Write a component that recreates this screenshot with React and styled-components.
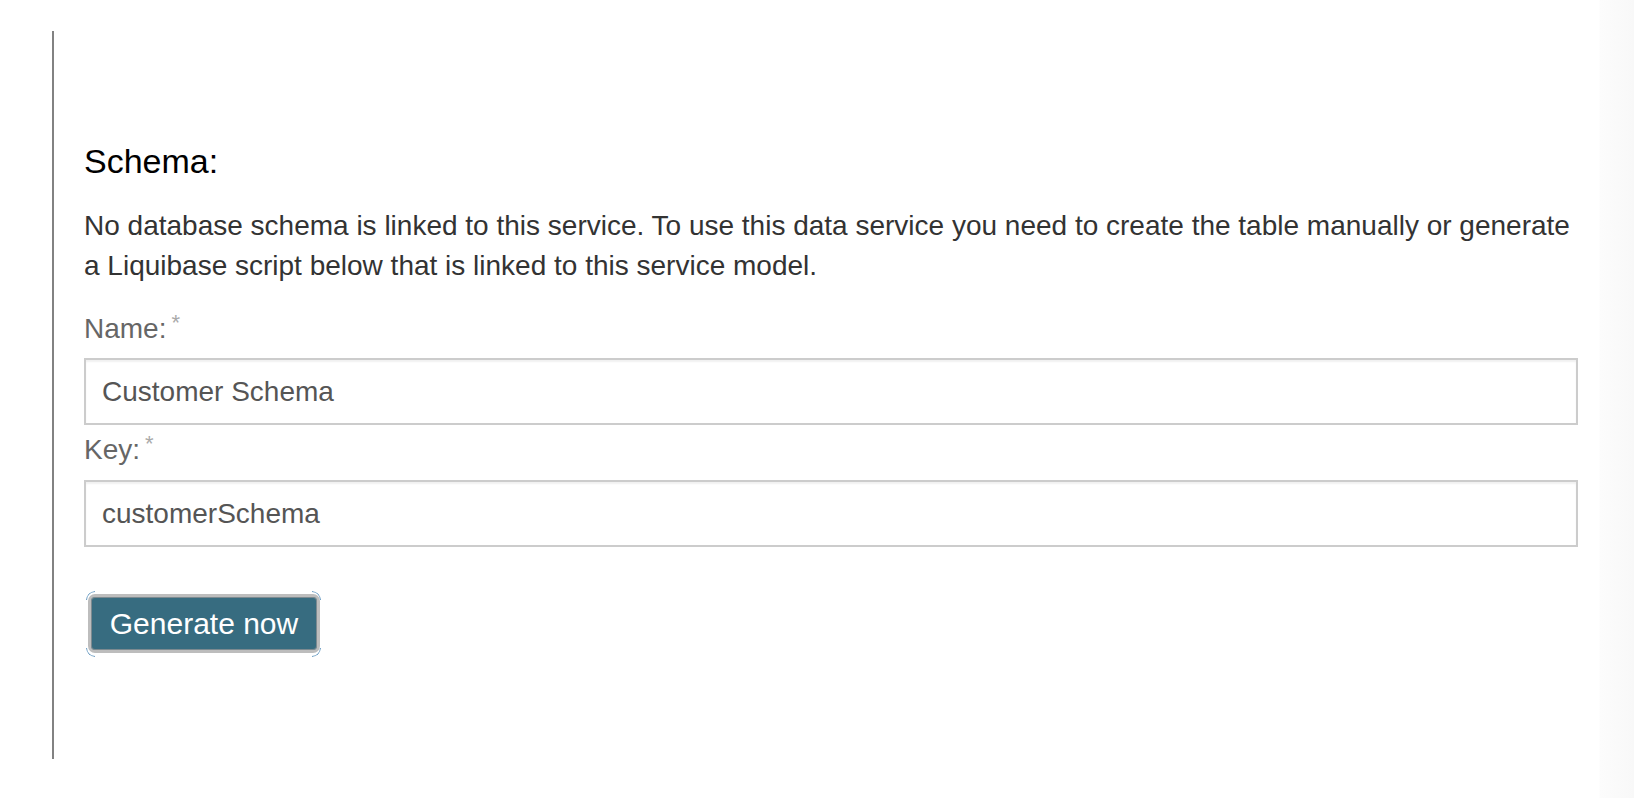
import React from "react";
import styled, { createGlobalStyle } from "styled-components";

const GlobalStyle = createGlobalStyle`
  html, body {
    margin: 0;
    padding: 0;
  }
  body {
    font-family: "Liberation Sans", Arial, Helvetica, sans-serif;
    background: linear-gradient(to right, #ffffff 1599px, #fcfcfc 1600px, #f8f8f8 100%);
    min-height: 798px;
  }
`;

const Page = styled.div`
  padding: 31px 56px 0 52px;
`;

const Panel = styled.section`
  border-left: 2px solid #828282;
  height: 728px;
  box-sizing: border-box;
  padding: 110px 0 0 30px;
`;

const Heading = styled.h3`
  margin: 0;
  font-size: 34px;
  line-height: 40px;
  font-weight: 400;
  color: #000;
`;

const Notice = styled.p`
  margin: 25px 0 0;
  font-size: 28px;
  line-height: 40px;
  color: #333;
`;

const Field = styled.div`
  display: flex;
  flex-direction: column;
  margin-top: ${(p) => (p.$first ? "23px" : "5px")};
`;

const Label = styled.label`
  font-size: 28px;
  line-height: 40px;
  color: #666;
  margin-bottom: ${(p) => (p.$first ? "9px" : "10px")};
`;

const Required = styled.sup`
  font-size: 22px;
  line-height: 0;
  color: #aaa;
  margin-left: 5px;
  vertical-align: 8px;
`;

const Input = styled.input`
  box-sizing: border-box;
  width: 100%;
  height: 67px;
  margin: 0;
  padding: 0 16px;
  border: 2px solid #cccccc;
  border-radius: 0;
  box-shadow: inset 0 2px 2px rgba(0, 0, 0, 0.06);
  font-family: "Liberation Sans", Arial, sans-serif;
  font-size: 28px;
  color: #555;
  background: #fff;
  outline: none;
`;

const Actions = styled.div`
  margin-top: 47px;
  padding-left: 4px;
`;

const Button = styled.button`
  position: relative;
  box-sizing: border-box;
  width: 232px;
  height: 59px;
  padding: 0;
  white-space: nowrap;
  border: 3px solid #bdbdbd;
  border-radius: 7px;
  box-shadow: inset 0 0 0 1px #7c8a90;
  background: #376c80;
  color: #fff;
  font-family: "Liberation Sans", Arial, sans-serif;
  font-size: 30px;
  cursor: pointer;

  &::before {
    content: "";
    position: absolute;
    inset: -6px -4px -7px -5px;
    border: 1.5px solid #5d93bd;
    border-radius: 9px;
    pointer-events: none;
    -webkit-mask:
      linear-gradient(#000, #000) top left / 9px 9px no-repeat,
      linear-gradient(#000, #000) top right / 9px 9px no-repeat,
      linear-gradient(#000, #000) bottom left / 9px 9px no-repeat,
      linear-gradient(#000, #000) bottom right / 9px 9px no-repeat;
    mask:
      linear-gradient(#000, #000) top left / 9px 9px no-repeat,
      linear-gradient(#000, #000) top right / 9px 9px no-repeat,
      linear-gradient(#000, #000) bottom left / 9px 9px no-repeat,
      linear-gradient(#000, #000) bottom right / 9px 9px no-repeat;
  }
`;

const App = () => {
  return (
    <Page>
      <GlobalStyle />
      <Panel>
        <Heading>Schema:</Heading>
        <Notice>
          No database schema is linked to this service. To use this data
          service you need to create the table manually or generate a Liquibase
          script below that is linked to this service model.
        </Notice>
        <Field $first>
          <Label $first>
            Name:<Required>*</Required>
          </Label>
          <Input defaultValue="Customer Schema" />
        </Field>
        <Field>
          <Label>
            Key:<Required>*</Required>
          </Label>
          <Input defaultValue="customerSchema" />
        </Field>
        <Actions>
          <Button>Generate now</Button>
        </Actions>
      </Panel>
    </Page>
  );
};

export default App;
